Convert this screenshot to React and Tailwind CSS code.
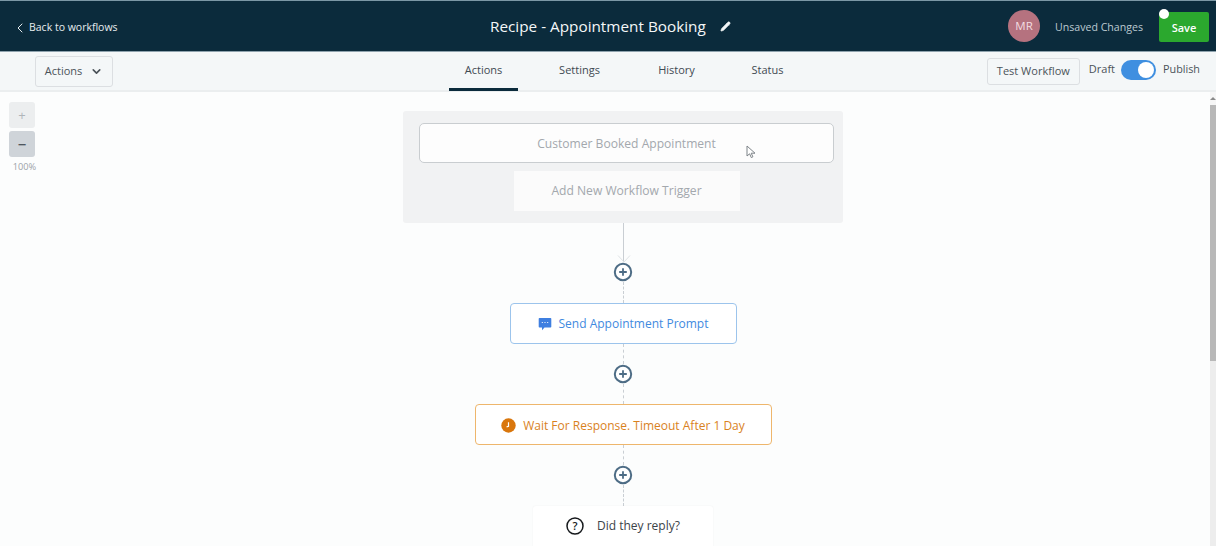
import React from "react";
import { ChevronLeft, ChevronDown, Pencil } from "lucide-react";

const PlusNode = ({ tail = "h-[20px]" }) => (
    <div className="flex flex-col items-center">
        <div className="h-[20px] w-0 border-l border-dashed border-[#c9ced3]" />
        <svg width="20" height="20" viewBox="0 0 20 20" className="shrink-0">
            <circle cx="10" cy="10" r="8.2" fill="#fff" stroke="#4d6c85" strokeWidth="2" />
            <path d="M10 6.2v7.6M6.2 10h7.6" stroke="#4d6c85" strokeWidth="1.8" />
        </svg>
        <div className={`${tail} w-0 border-l border-dashed border-[#c9ced3]`} />
    </div>
);

const Tab = ({ label, active, className }) => (
    <div className={`flex h-[39px] items-center justify-center border-b-[3px] pt-[2px] text-[11px] font-medium text-[#3f4a52] ${className} ${active ? "border-[#0b2b3c]" : "border-transparent"}`}>
        {label}
    </div>
);

export default function App() {
    return (
        <div className="flex h-[546px] w-[1216px] flex-col overflow-hidden bg-[#fcfdfd] font-['Open_Sans',sans-serif]">
            {/* Top bar */}
            <header className="flex h-[52px] shrink-0 items-center border-t border-b border-t-[#7c98a6] border-b-[#8fa3ae] bg-[#0b2b3c] pr-[7px] pl-[12px] text-white">
                <div className="mt-[3px] flex w-[320px] items-center gap-[1px] text-[10.5px] text-[#e6ecef]">
                    <ChevronLeft size={16} strokeWidth={1.5} />
                    <span>Back to workflows</span>
                </div>
                <div className="flex flex-1 items-center pl-[158px] text-[15.3px] text-[#f4f7f8]">
                    <span>Recipe - Appointment Booking</span>
                    <Pencil size={11} fill="currentColor" strokeWidth={1.5} className="ml-[14px]" />
                </div>
                <div className="flex size-[32px] items-center justify-center rounded-full bg-[#b5727f] text-[11.5px] text-[#f3dde0]">MR</div>
                <span className="mt-[3px] mr-[16px] ml-[15px] text-[10.6px] text-[#bccad1]">Unsaved Changes</span>
                <div className="relative mt-[1px]">
                    <div className="flex h-[30px] w-[50px] items-center justify-center rounded-[2px] bg-[#2ba82e] pt-[3px] text-[11px] font-semibold text-white">Save</div>
                    <div className="absolute top-[-3px] left-[0px] size-[10px] rounded-full bg-white" />
                </div>
            </header>

            {/* Sub nav */}
            <div className="flex h-[40px] shrink-0 items-center border-b-2 border-[#ebeeef] bg-[#f4f7f8] pr-[16px] pl-[35px]">
                <div className="flex h-[31px] w-[78px] items-center justify-center gap-[8px] rounded-[3px] border border-[#dcdfe2] text-[11px] font-medium text-[#4b5359]">
                    Actions
                    <ChevronDown size={13} strokeWidth={3} />
                </div>
                <nav className="ml-[336px] flex items-center">
                    <Tab label="Actions" active className="w-[69px]" />
                    <Tab label="Settings" className="ml-[28px] w-[67px]" />
                    <Tab label="History" className="ml-[45px] w-[37px]" />
                    <Tab label="Status" className="ml-[57px] w-[31px]" />
                </nav>
                <div className="ml-auto flex items-center">
                    <div className="flex h-[27px] w-[93px] items-center justify-center rounded-[3px] border border-[#dcdfe2] text-[11px] font-medium text-[#4b5359]">Test Workflow</div>
                    <span className="mb-[4px] ml-[9px] text-[11px] font-medium text-[#4b5359]">Draft</span>
                    <div className="mb-[2px] ml-[6px] flex h-[20px] w-[35px] items-center justify-end rounded-full bg-[#3f8fe0] pr-[2px]">
                        <div className="size-[16px] rounded-full bg-white" />
                    </div>
                    <span className="mb-[4px] ml-[7px] text-[10.8px] font-medium text-[#4b5359]">Publish</span>
                </div>
            </div>

            {/* Canvas */}
            <main className="relative flex min-h-0 flex-1 flex-col items-center overflow-hidden pt-[19px] pl-[30px]">
                <div className="absolute top-[10px] left-[9px] flex w-[26px] flex-col items-center gap-[3px]">
                    <div className="flex size-[26px] items-center justify-center rounded-[3px] bg-[#eceeef] text-[13px] leading-none text-[#b0b5b9]">+</div>
                    <div className="flex size-[26px] items-center justify-center rounded-[3px] bg-[#cfd4d9] text-[15px] font-semibold leading-none text-[#4e565d]">−</div>
                    <span className="ml-[5px] text-[9.2px] whitespace-nowrap text-[#9ca3a8]">100%</span>
                </div>

                <div className="flex flex-col items-center">
                    <div className="flex h-[112px] w-[440px] flex-col items-center rounded-[3px] bg-[#f1f2f3] pt-[12px] pl-[7px]">
                        <div className="relative flex h-[40px] w-[415px] items-center justify-center rounded-[5px] border border-[#c9cdd0] bg-[#fdfdfd] pt-[2px] text-[12.1px] text-[#a3a8ad]">
                            Customer Booked Appointment
                            <svg width="11" height="14" viewBox="0 0 11 14" className="absolute top-[21px] left-[326px]">
                                <path d="M1 1v10l2.6-2.2 1.7 3.8 1.6-.8-1.7-3.6H9z" fill="#fff" stroke="#7d8388" strokeWidth="1" />
                            </svg>
                        </div>
                        <div className="mt-[8px] flex h-[40px] w-[226px] items-center justify-center bg-[#fbfbfb] text-[12.1px] text-[#a3a8ad]">Add New Workflow Trigger</div>
                    </div>
                    <div className="relative h-[39px] w-0 border-l border-[#c9ced3]">
                        <svg width="14" height="8" viewBox="0 0 14 8" className="absolute top-[32px] left-[-7px]">
                            <path d="M1 0.5L7 7L13 0.5" fill="none" stroke="#dfe3e6" strokeWidth="1" />
                        </svg>
                    </div>
                    <div className="flex flex-col items-center">
                        <svg width="20" height="20" viewBox="0 0 20 20" className="shrink-0">
                            <circle cx="10" cy="10" r="8.2" fill="#fff" stroke="#4d6c85" strokeWidth="2" />
                            <path d="M10 6.2v7.6M6.2 10h7.6" stroke="#4d6c85" strokeWidth="1.8" />
                        </svg>
                        <div className="h-[21px] w-0 border-l border-dashed border-[#c9ced3]" />
                    </div>
                    <div className="flex h-[41px] w-[227px] items-center justify-center gap-[7px] rounded-[4px] border border-[#9cc4ec] bg-white text-[12px] text-[#3f8ae0]">
                        <svg width="14" height="14" viewBox="0 0 14 14">
                            <path d="M1.5 1h11a.8.8 0 0 1 .8.8v8a.8.8 0 0 1-.8.8H6.5L4 13.2v-2.6H1.5a.8.8 0 0 1-.8-.8v-8a.8.8 0 0 1 .8-.8z" fill="#3f7fe0" />
                            <path d="M3.8 5.5h1M6.5 5.5h1M9.2 5.5h1" stroke="#fff" strokeWidth="1.2" />
                        </svg>
                        Send Appointment Prompt
                    </div>
                    <PlusNode />
                    <div className="flex h-[41px] w-[297px] items-center justify-center gap-[7px] rounded-[4px] border border-[#eeb66c] bg-white pt-[2px] text-[12px] text-[#d9821e]">
                        <svg width="15" height="15" viewBox="0 0 15 15">
                            <circle cx="7.5" cy="7.5" r="7.2" fill="#d9760c" />
                            <path d="M7.5 4.2V8.3L5.6 8.8" fill="none" stroke="#fff" strokeWidth="1.2" />
                        </svg>
                        Wait For Response. Timeout After 1 Day
                    </div>
                    <PlusNode tail="h-[21px]" />
                    <div className="flex h-[44px] w-[180px] shrink-0 items-center gap-[13px] rounded-[3px] bg-white pb-[4px] pl-[33px] text-[12px] text-[#3c4349] shadow-[0_0_2px_rgba(0,0,0,0.06)]">
                        <svg width="18" height="18" viewBox="0 0 18 18">
                            <circle cx="9" cy="9" r="8" fill="none" stroke="#16191c" strokeWidth="1.5" />
                            <text x="9" y="13" textAnchor="middle" fontSize="11" fontWeight="600" fill="#16191c" fontFamily="Open Sans">?</text>
                        </svg>
                        Did they reply?
                    </div>
                </div>

                {/* Scrollbar */}
                <div className="absolute top-0 right-0 bottom-0 flex w-[6px] flex-col bg-[#ededed]">
                    <div className="flex h-[13px] items-center justify-center bg-[#f6f6f6]">
                        <div className="size-0 border-x-[3px] border-b-[3px] border-x-transparent border-b-[#8a8a8a]" />
                    </div>
                    <div className="h-[256px] bg-[#b8b8b8]" />
                </div>
            </main>
        </div>
    );
}
